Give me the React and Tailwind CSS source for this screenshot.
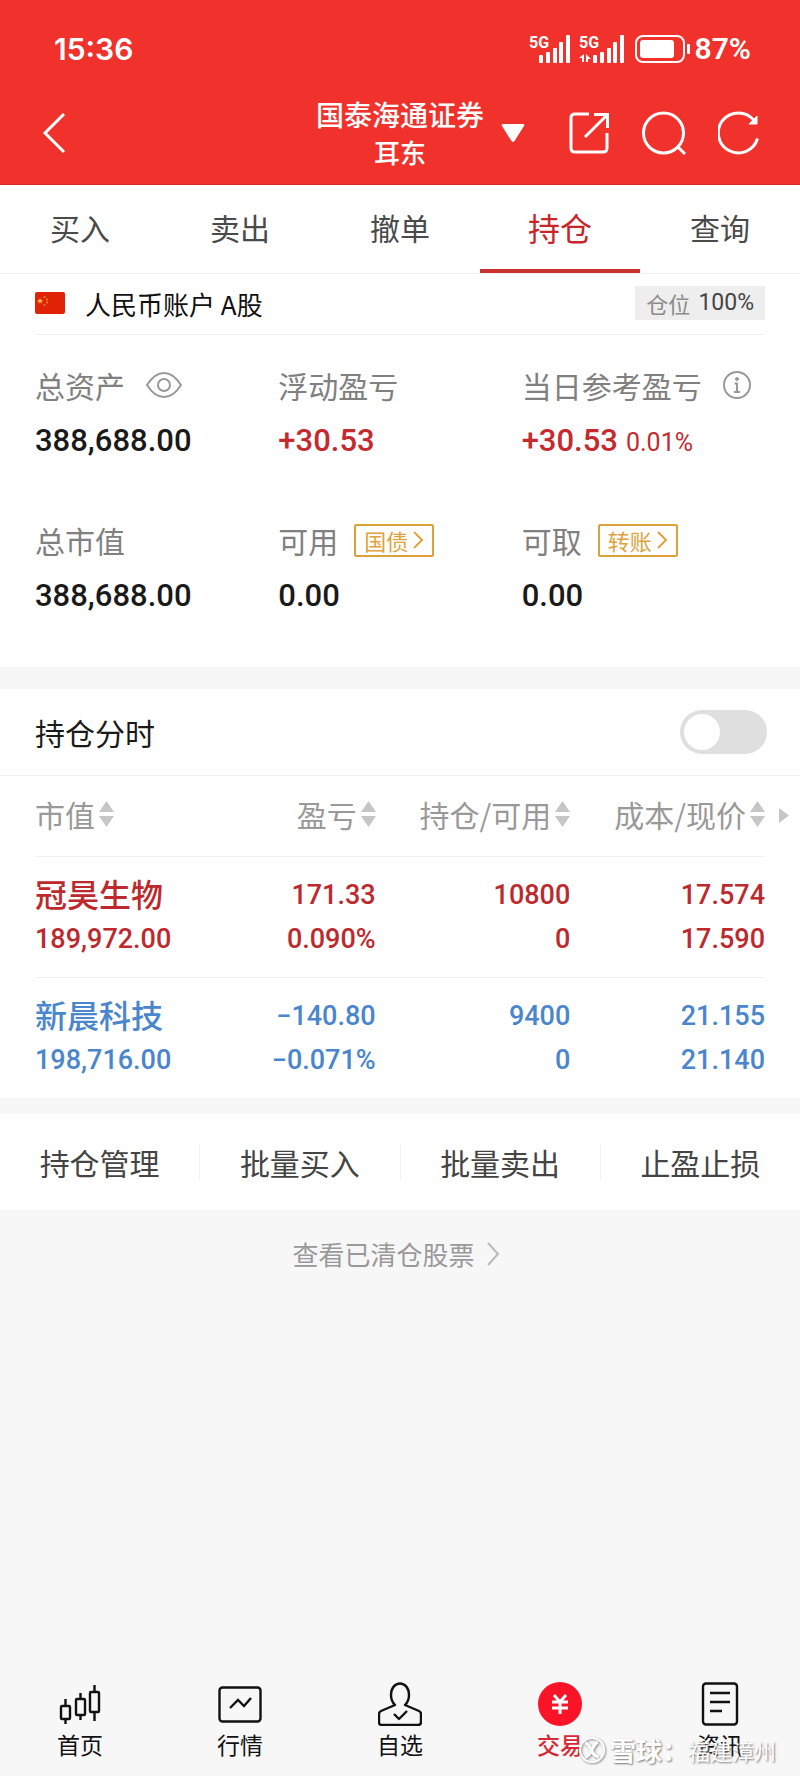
import React, { useState } from "react";

const tabs = ["买入", "卖出", "撤单", "持仓", "查询"];

const columns = ["市值", "盈亏", "持仓/可用", "成本/现价"];

const holdings = [
  { name: "冠昊生物", value: "189,972.00", profit: "171.33", rate: "0.090%", amount: "10800", usable: "0", cost: "17.574", price: "17.590", up: true },
  { name: "新晨科技", value: "198,716.00", profit: "−140.80", rate: "−0.071%", amount: "9400", usable: "0", cost: "21.155", price: "21.140", up: false },
];

const actions = ["持仓管理", "批量买入", "批量卖出", "止盈止损"];

function Signal({ data }) {
  return (
    <svg width={data ? 46 : 42} height="30" viewBox={data ? "0 0 46 30" : "0 0 42 30"} fill="currentColor">
      <text x="0" y="14" fontSize="16" fontWeight="700" fontFamily="Roboto, sans-serif">5G</text>
      {data && <path d="M5 20v8H3v-4H0l5-4zM7 20l5 5H9v3H7z" />}
      <g transform={data ? "translate(14 0)" : "translate(10 0)"}>
        <rect x="0" y="21" width="4" height="8" rx="1" />
        <rect x="7" y="18" width="4" height="11" rx="1" />
        <rect x="14" y="14" width="4" height="15" rx="1" />
        <rect x="20" y="8" width="4" height="21" rx="1" />
        <rect x="27" y="1" width="4" height="28" rx="1" />
      </g>
    </svg>
  );
}

function StatusBar() {
  return (
    <div className="flex items-center justify-between pt-7 pl-[54px] pr-[49px] h-[70px] font-[Inter,sans-serif]">
      <span className="text-[30px] leading-10 font-semibold">15:36</span>
      <div className="flex items-center">
        <Signal />
        <span className="w-2" />
        <Signal data />
        <svg className="ml-[10px]" width="56" height="30" viewBox="0 0 56 30" fill="none">
          <rect x="1" y="2" width="48" height="26" rx="7" stroke="currentColor" strokeWidth="2" />
          <rect x="5" y="6" width="34" height="18" rx="3" fill="currentColor" />
          <rect x="52" y="10" width="3" height="10" rx="1" fill="currentColor" />
        </svg>
        <span className="ml-1 text-[30px] leading-10 font-semibold font-[Roboto,sans-serif]">87%</span>
      </div>
    </div>
  );
}

function Header() {
  return (
    <header className="bg-[#f1312b] text-white">
      <StatusBar />
      <div className="grid grid-cols-[1fr_auto_1fr] items-center h-[115px] pt-3 px-[41px] border-b border-[#d32a24]">
        <button aria-label="返回" className="justify-self-start">
          <svg width="26" height="42" viewBox="0 0 26 42" fill="none" stroke="currentColor" strokeWidth="3">
            <path d="M23 2 4 21l19 19" />
          </svg>
        </button>
        <h1 className="text-center font-medium">
          <span className="block text-[28px] leading-[38px]">国泰海通证券</span>
          <span className="block text-[26px] leading-[38px]">耳东</span>
        </h1>
        <div className="flex items-center justify-between pl-[17px]">
          <button aria-label="切换账户">
            <svg width="24" height="20" viewBox="0 0 24 20" fill="currentColor">
              <path d="M2 1h20q2 0 1 2L13.5 18q-1.500 2-3 0L1 3Q0 1 2 1z" />
            </svg>
          </button>
          <div className="flex items-center gap-8">
            <button aria-label="分享">
              <svg width="41" height="42" viewBox="0 0 41 42" fill="none" stroke="currentColor" strokeWidth="3">
                <path d="M20 2H6q-4 0-4 4v30q0 4 4 4h28q4 0 4-4V21" />
                <path d="M16 25 38 3M25 2.5h13.5V16" />
              </svg>
            </button>
            <button aria-label="搜索">
              <svg width="44" height="44" viewBox="0 0 44 44" fill="none" stroke="currentColor" strokeWidth="3">
                <circle cx="21.5" cy="22" r="20" />
                <path d="m35 35 8 8" />
              </svg>
            </button>
            <button aria-label="刷新">
              <svg width="41" height="44" viewBox="0 0 41 44" fill="none" stroke="currentColor" strokeWidth="3">
                <path d="M39.5 27.5A20 20 0 1 1 36 9.5" />
                <path d="M39 5v8h-8z" fill="currentColor" strokeWidth="1" />
              </svg>
            </button>
          </div>
        </div>
      </div>
    </header>
  );
}

function Flag() {
  return (
    <svg width="30" height="22" viewBox="0 0 30 22">
      <rect width="30" height="22" rx="2" fill="#e02206" />
      <path d="m5 6 .9 2H8L6.4 9.4 7 11.5 5 10.2 3 11.5l.6-2.1L2 8h2.1z" fill="#ffc233" />
      <g fill="#f79a1e">
        <circle cx="9.5" cy="5" r=".9" />
        <circle cx="12" cy="7.5" r=".9" />
        <circle cx="12" cy="10.5" r=".9" />
        <circle cx="9.5" cy="13" r=".9" />
      </g>
    </svg>
  );
}

function Metric({ label, extra, children }) {
  return (
    <div>
      <div className="flex items-center h-[46px] text-[30px] text-[#808080] whitespace-nowrap">
        <span>{label}</span>
        {extra}
      </div>
      <div className="mt-[10px] text-[31px] leading-[46px] font-medium font-[Roboto,sans-serif] whitespace-nowrap">{children}</div>
    </div>
  );
}

function Tag({ children }) {
  return (
    <button className="ml-4 flex items-center h-[33px] px-2 border-2 border-[#dea137] rounded-xs text-[22px] leading-none text-[#e0a23c]">
      {children}
      <svg className="ml-1" width="12" height="20" viewBox="0 0 12 20" fill="none" stroke="currentColor" strokeWidth="2">
        <path d="m2 2 8 8-8 8" />
      </svg>
    </button>
  );
}

function SortIcon() {
  return (
    <svg className="ml-1 shrink-0" width="15" height="26" viewBox="0 0 15 26" fill="#c6c6c6">
      <path d="M7.5 0 15 11H0zM7.5 26 0 15h15z" />
    </svg>
  );
}

function Summary() {
  return (
    <section className="bg-white px-[35px]">
      <div className="flex items-center justify-between h-[61px] pb-[2px] border-b border-[#f0f0f0]">
        <div className="flex items-center text-[26px] text-[#111]">
          <Flag />
          <span className="ml-5">人民币账户 A股</span>
        </div>
        <div className="flex items-center h-[34px] px-[11px] bg-[#eeeeee] text-[22px] text-[#444]">
          <span className="text-[#8a8a8a]">仓位</span>
          <span className="ml-2 text-[23px] font-[Roboto,sans-serif]">100%</span>
        </div>
      </div>
      <div className="grid grid-cols-3 gap-y-[53px] pt-[27px] pb-[48px] text-[#1a1a1a]">
        <Metric
          label="总资产"
          extra={
            <button aria-label="隐藏金额" className="ml-[21px] text-[#999]">
              <svg width="36" height="26" viewBox="0 0 36 26" fill="none" stroke="currentColor" strokeWidth="2">
                <path d="M1 13C6 5 12 1 18 1s12 4 17 12c-5 8-11 12-17 12S6 21 1 13z" />
                <circle cx="18" cy="13" r="6" />
              </svg>
            </button>
          }
        >
          388,688.00
        </Metric>
        <Metric label="浮动盈亏">
          <span className="text-[#c42a2e]">+30.53</span>
        </Metric>
        <Metric
          label="当日参考盈亏"
          extra={
            <button aria-label="说明" className="ml-5 text-[#999]">
              <svg width="30" height="30" viewBox="0 0 30 30" fill="none" stroke="currentColor" strokeWidth="2">
                <circle cx="15" cy="15" r="13" />
                <circle cx="15" cy="9" r="1.5" fill="currentColor" strokeWidth="1" />
                <path d="M12.5 13.5H15V22M12 22h6" />
              </svg>
            </button>
          }
        >
          <span className="text-[#c42a2e]">
            +30.53<span className="ml-2 text-[25px] leading-none font-normal">0.01%</span>
          </span>
        </Metric>
        <Metric label="总市值">388,688.00</Metric>
        <Metric label="可用" extra={<Tag>国债</Tag>}>0.00</Metric>
        <Metric label="可取" extra={<Tag>转账</Tag>}>0.00</Metric>
      </div>
    </section>
  );
}

function Holdings() {
  const [chart, setChart] = useState(false);

  return (
    <section className="mt-[22px] bg-white">
      <label className="flex items-center justify-between h-[87px] pl-[35px] pr-[33px] border-b border-[#f0f0f0] text-[30px] text-[#1a1a1a]">
        持仓分时
        <input
          type="checkbox"
          role="switch"
          checked={chart}
          onChange={(e) => setChart(e.target.checked)}
          className="appearance-none w-[87px] h-11 p-1 rounded-full bg-[#dfdfdf] checked:bg-[#c42a2e] before:block before:size-9 before:rounded-full before:bg-white checked:before:ml-auto"
        />
      </label>

      <div className="relative px-[35px]">
        <table className="w-full table-fixed border-collapse">
          <thead>
            <tr className="h-20 border-b border-[#f0f0f0]">
              {columns.map((col, i) => (
                <th key={col} className={`p-0 pb-[3px] font-normal ${i === 0 ? "w-[20%]" : ""}`}>
                  <button className={`flex items-center w-full text-[30px] leading-10 text-[#999] whitespace-nowrap ${i === 0 ? "" : "justify-end"}`}>
                    {col}
                    <SortIcon />
                  </button>
                </th>
              ))}
            </tr>
          </thead>
          <tbody className="text-[27px] leading-[44px] font-medium font-[Roboto,sans-serif] text-right">
            {holdings.map((h) => (
              <tr key={h.name} className={`h-[121px] border-b border-[#f0f0f0] last:border-b-0 ${h.up ? "text-[#bd292d]" : "text-[#4a86cc]"}`}>
                <td className="p-0 text-left whitespace-nowrap">
                  <div className="mb-1 text-[32px] leading-10 font-[Noto_Sans_CJK_SC,sans-serif]">{h.name}</div>
                  <div>{h.value}</div>
                </td>
                <td className="p-0">
                  <div>{h.profit}</div>
                  <div>{h.rate}</div>
                </td>
                <td className="p-0">
                  <div>{h.amount}</div>
                  <div>{h.usable}</div>
                </td>
                <td className="p-0">
                  <div>{h.cost}</div>
                  <div>{h.price}</div>
                </td>
              </tr>
            ))}
          </tbody>
        </table>
        {/* more columns to the right */}
        <svg className="absolute right-[11px] top-8" width="10" height="15" viewBox="0 0 10 15" fill="#c6c6c6">
          <path d="m0 0 10 7.500L0 15z" />
        </svg>
      </div>
    </section>
  );
}

const navItems = [
  {
    label: "首页",
    icon: (
      <svg width="44" height="44" viewBox="0 0 44 44" fill="none" stroke="currentColor" strokeWidth="2.4">
        <rect x="3" y="24" width="9" height="13" rx="1" />
        <path d="M7.5 17v7M7.5 37v5" />
        <rect x="18" y="17" width="9" height="16" rx="1" />
        <path d="M22.5 11v6M22.5 33v5" />
        <rect x="32" y="10" width="9" height="20" rx="1" />
        <path d="M36.5 3v7M36.5 30v9" />
      </svg>
    ),
  },
  {
    label: "行情",
    icon: (
      <svg width="44" height="44" viewBox="0 0 44 44" fill="none" stroke="currentColor" strokeWidth="2.4">
        <rect x="1.5" y="5.5" width="41" height="34" rx="3" />
        <path d="m12 26 8-8 6 6 7-8" />
      </svg>
    ),
  },
  {
    label: "自选",
    icon: (
      <svg width="44" height="44" viewBox="0 0 44 44" fill="none" stroke="currentColor" strokeWidth="2.4" strokeLinejoin="round">
        <path d="M17 23c-3-3-4-6-4-10C13 6 17 1.500 22 1.500s9 4.500 9 11.500c0 4-1 7-4 10l14 6q2 1 2 3v8q0 3-3 3H4q-3 0-3-3v-8q0-2 2-3z" />
        <path d="m16 32 5 5 8-8" />
      </svg>
    ),
  },
  {
    label: "交易",
    active: true,
    icon: (
      <svg width="44" height="44" viewBox="0 0 44 44" fill="none">
        <circle cx="22" cy="22" r="22" fill="#fb1428" />
        <path d="m16 13 6 7 6-7M14 20h16M14 26h16M22 20v12" stroke="#fff" strokeWidth="3" />
      </svg>
    ),
  },
  {
    label: "资讯",
    icon: (
      <svg width="44" height="44" viewBox="0 0 44 44" fill="none" stroke="currentColor" strokeWidth="2.4">
        <rect x="5" y="1.5" width="34" height="41" rx="3" />
        <path d="M12 11h20M12 20h20M12 29h12" />
      </svg>
    ),
  },
];

function BottomNav() {
  return (
    <nav className="relative mt-auto flex pb-[14px]">
      {navItems.map((item) => (
        <a key={item.label} href="#" className={`flex-1 flex flex-col items-center ${item.active ? "text-[#d62836]" : "text-[#111]"}`}>
          {item.icon}
          <span className={`text-[23px] leading-9 ${item.active ? "font-medium" : ""}`}>{item.label}</span>
        </a>
      ))}
      <div className="absolute right-6 bottom-2 flex items-center text-white [text-shadow:1px_1px_2px_#777]">
        <svg className="drop-shadow-[1px_1px_1px_#888]" width="28" height="28" viewBox="0 0 28 28" fill="none" stroke="#fff" strokeWidth="2">
          <circle cx="14" cy="14" r="12" />
          <path d="M7 7c7 1 5 13 14 14M20 6c-3 1-4 4-6 8s-4 7-7 7" strokeWidth="3" />
        </svg>
        <span className="ml-1 text-[26px] leading-9 font-bold">雪球：</span>
        <span className="text-[22px] leading-9">福建漳州</span>
      </div>
    </nav>
  );
}

export default function App() {
  const [tab, setTab] = useState("持仓");

  return (
    <div className="min-h-screen flex flex-col bg-[#f7f7f7] font-[Noto_Sans_CJK_SC,sans-serif]">
      <Header />

      <div className="flex h-[89px] bg-white border-b border-[#f0f0f0]">
        {tabs.map((t) => (
          <button
            key={t}
            onClick={() => setTab(t)}
            className={`flex-1 border-b-4 ${t === tab ? "text-[32px] text-[#c8262b] border-[#c9332f]" : "text-[30px] text-[#4a4a4a] border-transparent"}`}
          >
            {t}
          </button>
        ))}
      </div>

      <Summary />
      <Holdings />

      <div className="mt-4 flex items-center h-24 bg-white text-[30px] text-[#444]">
        {actions.map((a) => (
          <button key={a} className="flex-1 h-9 leading-9 border-r border-[#f3f3f3] last:border-r-0">
            {a}
          </button>
        ))}
      </div>

      <a href="#" className="self-center mt-6 mb-6 pr-2 flex items-center text-[26px] leading-10 text-[#999]">
        查看已清仓股票
        <svg className="ml-3" width="13" height="24" viewBox="0 0 13 24" fill="none" stroke="#bbb" strokeWidth="2">
          <path d="m1 1 10 11L1 23" />
        </svg>
      </a>

      <BottomNav />
    </div>
  );
}
